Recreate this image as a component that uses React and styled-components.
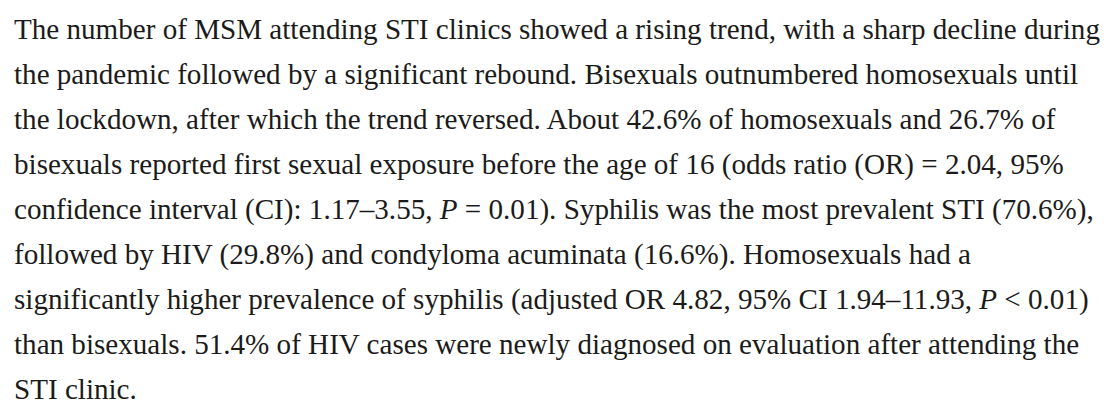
import React from "react";
import styled, { createGlobalStyle } from "styled-components";

const GlobalStyle = createGlobalStyle`
  html, body {
    margin: 0;
    padding: 0;
    background: #ffffff;
  }
`;

const Abstract = styled.div`
  padding: 7px 14px 0 14px;
  font-family: "Liberation Serif", "Times New Roman", serif;
  font-size: 29.1px;
  line-height: 45px;
  color: #1b1b1b;
`;

const Line = styled.span`
  display: block;
  white-space: nowrap;
`;

const Stat = styled.i`
  font-style: italic;
`;

const lines = [
  "The number of MSM attending STI clinics showed a rising trend, with a sharp decline during",
  "the pandemic followed by a significant rebound. Bisexuals outnumbered homosexuals until",
  "the lockdown, after which the trend reversed. About 42.6% of homosexuals and 26.7% of",
  "bisexuals reported first sexual exposure before the age of 16 (odds ratio (OR) = 2.04, 95%",
  <>
    confidence interval (CI): 1.17–3.55, <Stat>P</Stat> = 0.01). Syphilis was the most prevalent STI (70.6%),
  </>,
  "followed by HIV (29.8%) and condyloma acuminata (16.6%). Homosexuals had a",
  <>
    significantly higher prevalence of syphilis (adjusted OR 4.82, 95% CI 1.94–11.93, <Stat>P</Stat> &lt; 0.01)
  </>,
  "than bisexuals. 51.4% of HIV cases were newly diagnosed on evaluation after attending the",
  "STI clinic.",
];

const App = () => {
  return (
    <>
      <GlobalStyle />
      <Abstract>
        {lines.map((l, i) => (
          <Line key={i}>{l}</Line>
        ))}
      </Abstract>
    </>
  );
};

export default App;
